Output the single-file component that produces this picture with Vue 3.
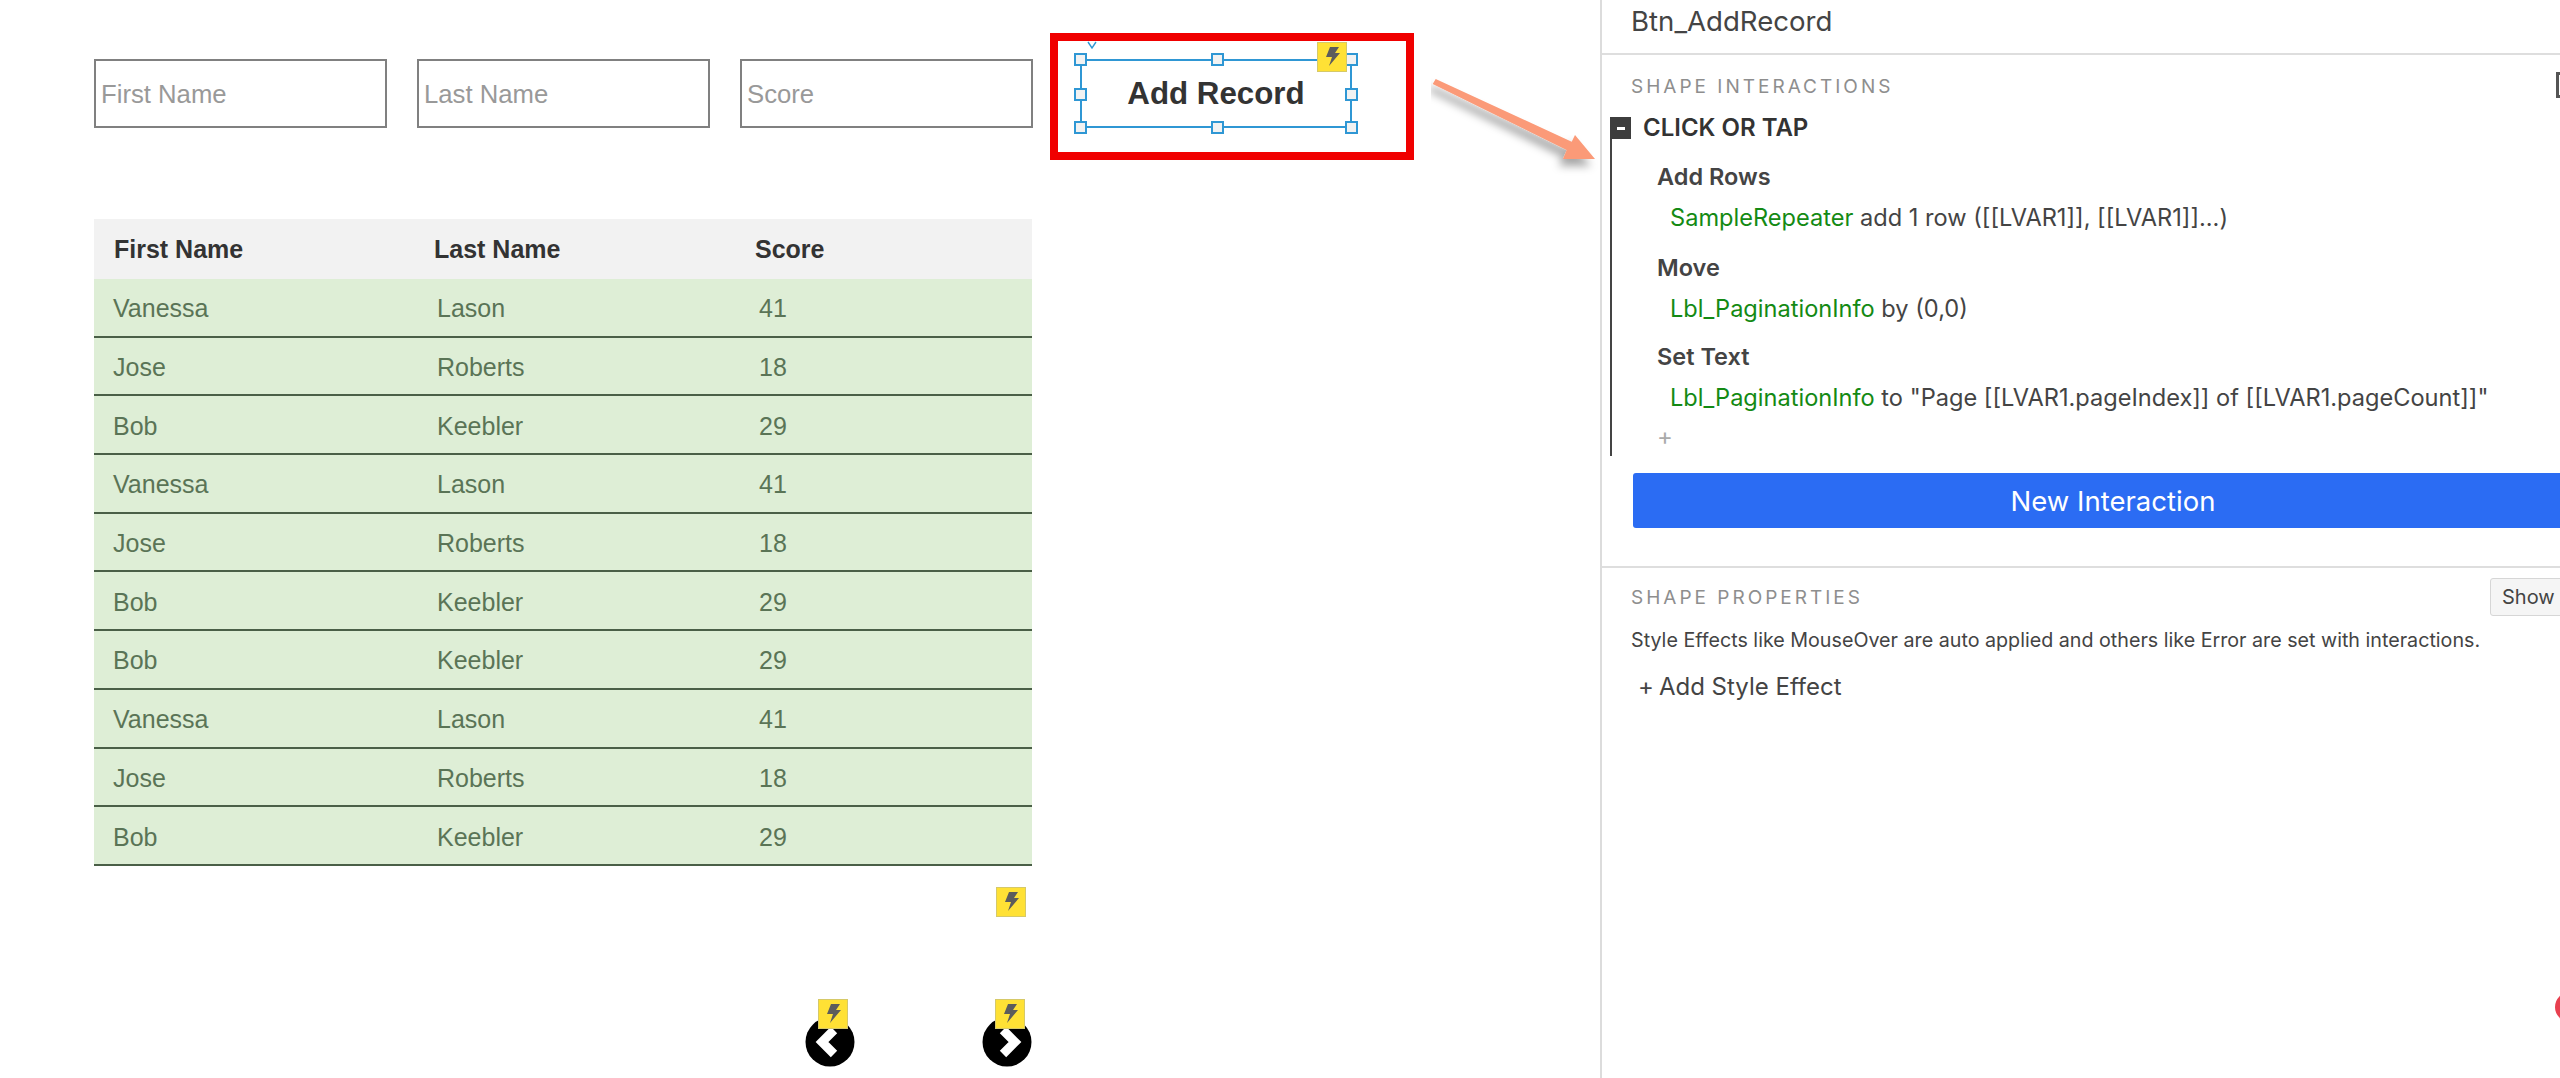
<script setup>
const rows = [
  ['Vanessa', 'Lason', 41],
  ['Jose', 'Roberts', 18],
  ['Bob', 'Keebler', 29],
  ['Vanessa', 'Lason', 41],
  ['Jose', 'Roberts', 18],
  ['Bob', 'Keebler', 29],
  ['Bob', 'Keebler', 29],
  ['Vanessa', 'Lason', 41],
  ['Jose', 'Roberts', 18],
  ['Bob', 'Keebler', 29],
]
const fields = ['First Name', 'Last Name', 'Score']
const handles = ['h-tl', 'h-tc', 'h-tr', 'h-ml', 'h-mr', 'h-bl', 'h-bc', 'h-br']
const actions = [
  { title: 'Add Rows', target: 'SampleRepeater', rest: ' add 1 row ([[LVAR1]], [[LVAR1]]...)' },
  { title: 'Move', target: 'Lbl_PaginationInfo', rest: ' by (0,0)' },
  { title: 'Set Text', target: 'Lbl_PaginationInfo', rest: ' to "Page [[LVAR1.pageIndex]] of [[LVAR1.pageCount]]"' },
]
const boltPath = 'M13 5 L22 5 L18 11 L23 11 L12 24 L15 15 L9 15 Z'
</script>

<template>
  <div class="page">
    <section class="canvas">
      <div class="top-row">
        <div class="inputs">
          <input v-for="f in fields" :key="f" class="field" :placeholder="f" />
        </div>
        <div class="callout">
          <svg class="pin" viewBox="0 0 10 8"><path d="M1 1 L5 7 L9 1" fill="none" stroke="#2f97d4" stroke-width="1.4" /></svg>
          <div class="selection">
            <span v-for="h in handles" :key="h" class="handle" :class="h"></span>
            <span class="label">Add Record</span>
          </div>
          <svg class="bolt on-button" viewBox="1 1 28 28"><path :d="boltPath" /></svg>
        </div>
      </div>

      <div class="table">
        <div class="thead">
          <span>First Name</span><span>Last Name</span><span>Score</span>
        </div>
        <div v-for="(r, i) in rows" :key="i" class="row">
          <span>{{ r[0] }}</span><span>{{ r[1] }}</span><span>{{ r[2] }}</span>
        </div>
      </div>

      <div class="table-bolt">
        <svg class="bolt" viewBox="1 1 28 28"><path :d="boltPath" /></svg>
      </div>

      <div class="pager">
        <div class="nav">
          <svg class="circle" viewBox="0 0 50 50">
            <circle cx="25" cy="25" r="24.5" fill="#000" />
            <path d="M29 13 L17 25 L29 37" fill="none" stroke="#fff" stroke-width="9" />
          </svg>
          <svg class="bolt on-nav" viewBox="1 1 28 28"><path :d="boltPath" /></svg>
        </div>
        <div class="nav">
          <svg class="circle" viewBox="0 0 50 50">
            <circle cx="25" cy="25" r="24.5" fill="#000" />
            <path d="M21 13 L33 25 L21 37" fill="none" stroke="#fff" stroke-width="9" />
          </svg>
          <svg class="bolt on-nav" viewBox="1 1 28 28"><path :d="boltPath" /></svg>
        </div>
      </div>
    </section>

    <aside class="panel">
      <div class="title">Btn_AddRecord</div>
      <div class="interactions">
        <div class="section-label">SHAPE INTERACTIONS</div>
        <div class="event"><span class="minus"></span>CLICK OR TAP</div>
        <div class="actions">
          <div v-for="a in actions" :key="a.title" class="action">
            <div class="action-title">{{ a.title }}</div>
            <div class="action-line"><span class="target">{{ a.target }}</span>{{ a.rest }}</div>
          </div>
          <div class="add-action">+</div>
        </div>
        <button class="new-btn">New Interaction</button>
      </div>
      <div class="properties">
        <div class="prop-head">
          <span class="section-label">SHAPE PROPERTIES</span>
          <button class="show">Show</button>
        </div>
        <p class="hint">Style Effects like MouseOver are auto applied and others like Error are set with interactions.</p>
        <div class="add-effect"><span class="plus">+</span>Add Style Effect</div>
      </div>
      <span class="bracket"></span>
      <span class="red-dot"></span>
    </aside>

    <svg class="arrow" viewBox="0 0 200 110" width="200" height="110">
      <defs>
        <filter id="sh" x="-20%" y="-20%" width="150%" height="150%">
          <feDropShadow dx="-4" dy="7" stdDeviation="4" flood-color="#000" flood-opacity="0.35" />
        </filter>
      </defs>
      <path d="M1.7 10 L4.7 5 L140.7 67.7 L144 61 L164 85 L132 85 L135.7 76 Z" fill="#fb9a78" filter="url(#sh)" />
    </svg>
  </div>
</template>

<style>
html, body { margin: 0; background: #fff; }
</style>

<style scoped>
.page {
  position: relative;
  width: 2560px;
  height: 1078px;
  overflow: hidden;
  display: flex;
  background: #fff;
  font-family: "Liberation Sans", Arial, sans-serif;
}
.canvas {
  width: 1600px;
  flex: none;
  box-sizing: border-box;
  padding: 33px 0 0 94px;
}
.top-row { display: flex; align-items: flex-start; }
.inputs { display: flex; gap: 30px; margin-top: 26px; }
.field {
  width: 293px;
  height: 69px;
  box-sizing: border-box;
  border: 2px solid #808080;
  border-radius: 0;
  padding: 2px 5px 0;
  margin: 0;
  outline: none;
  font: 25.7px "Liberation Sans", Arial, sans-serif;
  background: #fff;
}
.field::placeholder { color: #999; opacity: 1; }
.callout {
  position: relative;
  margin-left: 17px;
  width: 364px;
  height: 127px;
  box-sizing: border-box;
  border: 8px solid #f00000;
}
.pin {
  position: absolute;
  left: 29px;
  top: 0;
  width: 10px;
  height: 8px;
}
.selection {
  position: absolute;
  left: 22px;
  top: 18px;
  width: 272px;
  height: 69px;
  box-sizing: border-box;
  border: 2px solid #2f97d4;
  display: flex;
  align-items: center;
  justify-content: center;
}
.label {
  font-size: 31.3px;
  font-weight: 700;
  color: #333;
}
.handle {
  position: absolute;
  width: 13px;
  height: 13px;
  box-sizing: border-box;
  border: 2px solid #2f97d4;
  background: #f2f2f2;
}
.h-tl { left: -8px; top: -8px; }
.h-tc { left: 129px; top: -8px; }
.h-tr { right: -8px; top: -8px; }
.h-ml { left: -8px; top: 27px; }
.h-mr { right: -8px; top: 27px; }
.h-bl { left: -8px; bottom: -8px; }
.h-bc { left: 129px; bottom: -8px; }
.h-br { right: -8px; bottom: -8px; }
.bolt {
  display: block;
  width: 30px;
  height: 30px;
  box-sizing: border-box;
  background: #ffe135;
  border: 1px solid #d6c968;
}
.bolt path { fill: #5c5c5c; }
.on-button { position: absolute; left: 259px; top: 1px; }
.table { width: 938px; margin-top: 59px; }
.thead {
  height: 60px;
  background: #f2f2f2;
  display: grid;
  grid-template-columns: 320px 321px 1fr;
  padding-left: 20px;
  align-items: center;
  font-size: 25px;
  font-weight: 700;
  color: #333;
}
.row {
  height: 58.7px;
  box-sizing: border-box;
  padding-top: 3px;
  background: #deeed6;
  border-bottom: 2px solid #4a5f47;
  display: grid;
  grid-template-columns: 324px 322px 1fr;
  padding-left: 19px;
  align-items: center;
  font-size: 25px;
  color: #5a7456;
}
.table-bolt {
  width: 938px;
  display: flex;
  justify-content: flex-end;
  padding: 21px 6px 0 0;
  box-sizing: border-box;
}
.pager {
  display: flex;
  gap: 127px;
  margin: 100px 0 0 711px;
}
.nav { position: relative; width: 50px; height: 50px; }
.circle { display: block; width: 50px; height: 50px; }
.on-nav { position: absolute; left: 13px; top: -18px; }

.panel {
  position: relative;
  flex: none;
  width: 960px;
  box-sizing: border-box;
  border-left: 2px solid #dcdcdc;
  font-family: Inter, "Liberation Sans", sans-serif;
  color: #444;
  overflow: hidden;
}
.title {
  height: 55px;
  box-sizing: border-box;
  border-bottom: 2px solid #dedede;
  padding-left: 29px;
  font-size: 27.6px;
  line-height: 43px;
  color: #444;
}
.section-label {
  font-size: 19px;
  letter-spacing: 3px;
  color: #8e8e8e;
}
.interactions {
  padding: 20px 0 0 0;
  height: 513px;
  box-sizing: border-box;
  border-bottom: 2px solid #dedede;
}
.interactions > .section-label { padding-left: 29px; line-height: 24px; }
.event {
  position: relative;
  margin: 18px 0 0 8px;
  padding-left: 33px;
  height: 22px;
  line-height: 22px;
  font-size: 24px;
  font-weight: 600;
  color: #333;
}
.minus {
  position: absolute;
  left: 0;
  top: 0;
  width: 21px;
  height: 22px;
  background: #3d3d3d;
}
.minus::after {
  content: "";
  position: absolute;
  left: 7px;
  top: 10px;
  width: 8px;
  height: 3px;
  background: #fff;
}
.actions {
  margin-left: 8px;
  border-left: 2px solid #444;
  height: 317px;
  box-sizing: border-box;
  padding: 17px 0 0 45px;
}
.action { margin-bottom: 9px; }
.action:nth-child(2) { margin-bottom: 7px; }
.action:nth-child(3) { margin-bottom: 6px; }
.action-title {
  font-size: 23.5px;
  font-weight: 600;
  line-height: 41px;
  color: #444;
}
.action-line {
  font-size: 23.6px;
  line-height: 41px;
  padding-left: 13px;
  color: #444;
  white-space: nowrap;
}
.target { color: #148a14; }
.add-action {
  font-size: 24px;
  line-height: 26px;
  color: #aaa;
}
.new-btn {
  display: block;
  margin: 17px 0 0 31px;
  width: 960px;
  height: 55px;
  border: 0;
  border-radius: 3px;
  background: #2b6cf3;
  color: #fff;
  font: 400 27.5px Inter, "Liberation Sans", sans-serif;
}
.properties { padding: 10px 0 0 29px; }
.prop-head {
  display: flex;
  align-items: center;
  justify-content: space-between;
  width: 1000px;
}
.show {
  width: 120px;
  height: 38px;
  margin-right: 21px;
  box-sizing: border-box;
  border: 1px solid #d6d6d6;
  border-radius: 3px;
  background: #f5f5f5;
  text-align: left;
  padding: 0 11px;
  color: #444;
  font: 20px Inter, "Liberation Sans", sans-serif;
}
.hint {
  margin: 10px 0 0;
  font-size: 19.7px;
  line-height: 28px;
  color: #444;
  white-space: nowrap;
}
.add-effect {
  margin: 16px 0 0 7px;
  font-size: 24px;
  line-height: 34px;
  color: #444;
}
.plus { margin-right: 5px; }
.bracket {
  position: absolute;
  left: 954px;
  top: 72px;
  width: 10px;
  height: 26px;
  box-sizing: border-box;
  border: 3px solid #555;
}
.red-dot {
  position: absolute;
  left: 953px;
  top: 992px;
  width: 30px;
  height: 30px;
  border-radius: 50%;
  background: #e8404f;
}
.arrow {
  position: absolute;
  left: 1431px;
  top: 74px;
}
</style>
